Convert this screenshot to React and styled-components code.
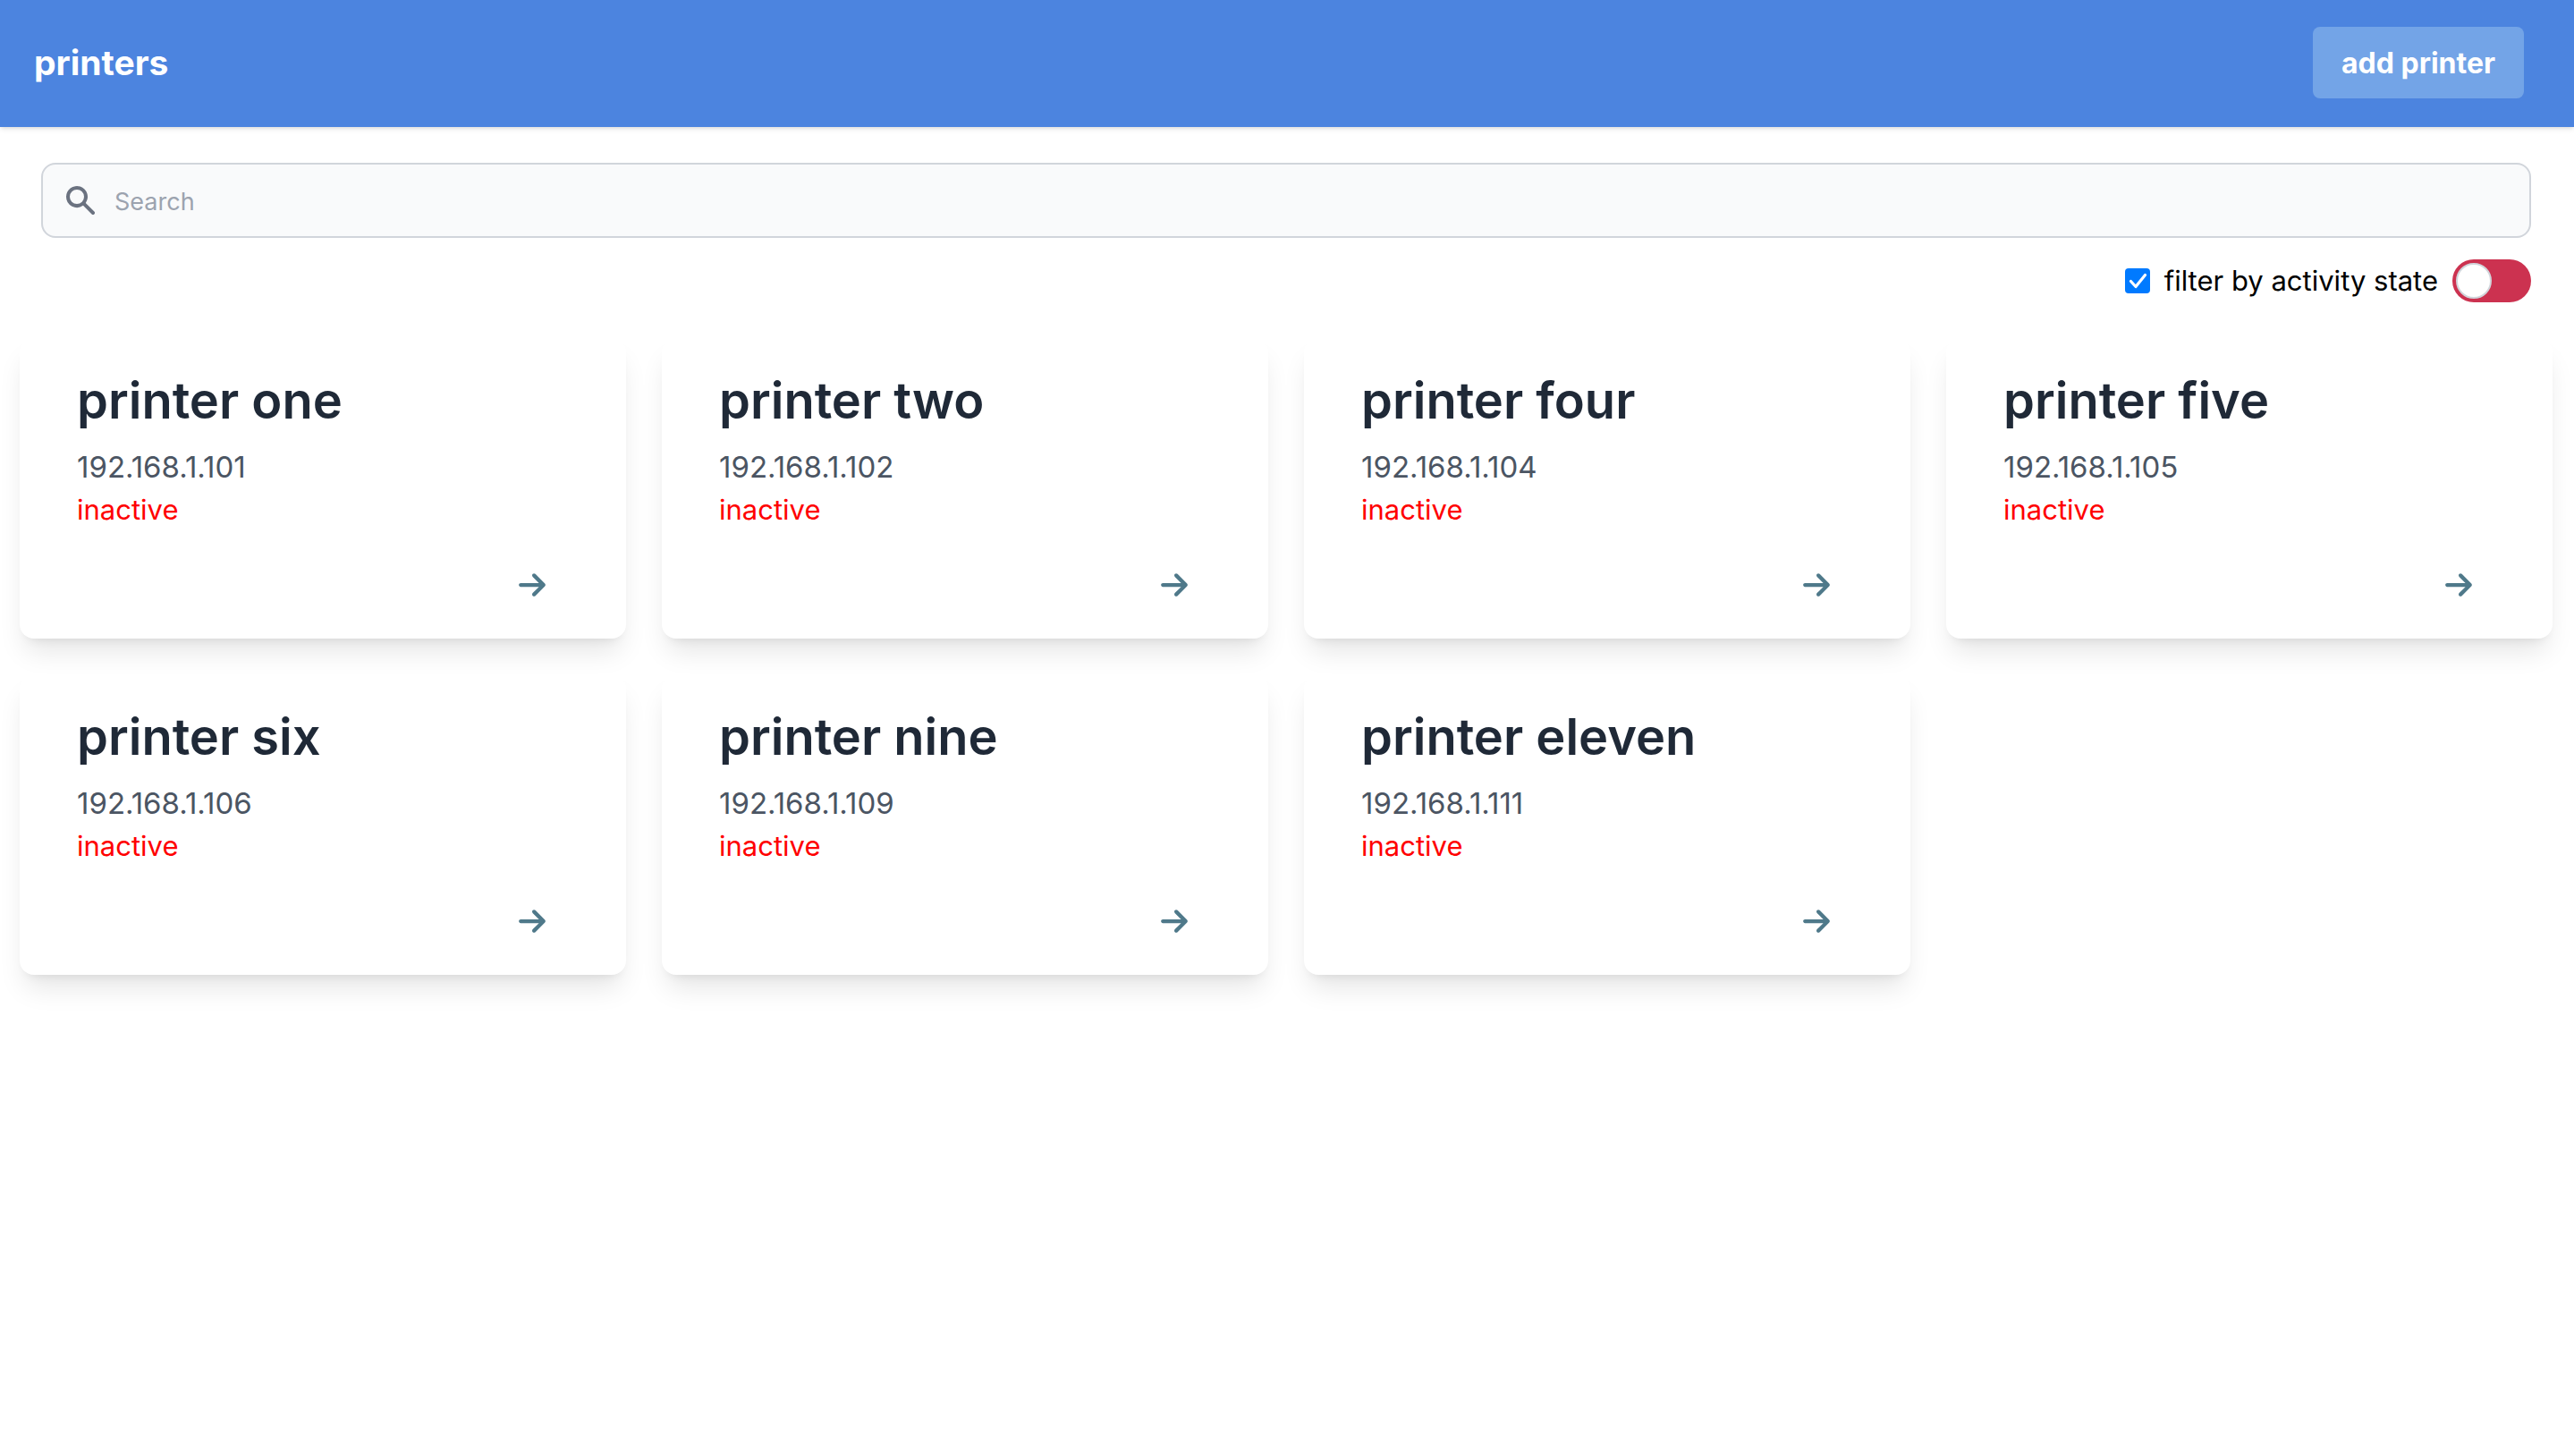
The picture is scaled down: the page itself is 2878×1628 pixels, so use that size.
import React, { useState } from "react";
import styled, { createGlobalStyle } from "styled-components";

const GlobalStyle = createGlobalStyle`
  *, *::before, *::after { box-sizing: border-box; }
  body {
    margin: 0;
    background: #ffffff;
    color: #000000;
    font-family: Inter, Roboto, "Liberation Sans", sans-serif;
    font-size: 31px;
    line-height: 48px;
  }
  button, input { font-family: inherit; }
`;

const Header = styled.header`
  display: flex;
  align-items: center;
  justify-content: space-between;
  padding: 30px 56px 32px 38px;
  background: #4c84df;
  box-shadow: 0 2px 6px rgba(0, 0, 0, 0.1), 0 2px 4px -2px rgba(0, 0, 0, 0.1);
`;

const Brand = styled.h1`
  margin: 0;
  color: #ffffff;
  font-size: 39px;
  line-height: 56px;
  font-weight: 700;
`;

const AddButton = styled.button`
  padding: 17px 32px 15px;
  border: 0;
  border-radius: 8px;
  background: #73a4e7;
  color: #ffffff;
  font-size: 32px;
  line-height: 48px;
  font-weight: 700;
  cursor: pointer;
`;

const Controls = styled.section`
  display: flex;
  flex-direction: column;
  gap: 24px;
  padding: 40px 48px 40px 46px;
`;

const SearchBox = styled.label`
  display: flex;
  align-items: center;
  gap: 18px;
  height: 84px;
  padding: 0 22px;
  border: 2px solid #d1d5db;
  border-radius: 16px;
  background: #f9fafb;
  color: #6b7280;
`;

const SearchInput = styled.input`
  flex: 1;
  min-width: 0;
  height: 40px;
  padding: 2px 0 0;
  border: 0;
  outline: 0;
  background: transparent;
  color: #111827;
  font-size: 27px;
  line-height: 38px;

  &::placeholder { color: #9ca3af; opacity: 1; }
`;

const FilterRow = styled.div`
  display: flex;
  align-items: center;
  justify-content: flex-end;
  gap: 16px;
`;

const FilterLabel = styled.label`
  display: flex;
  align-items: center;
  gap: 16px;
`;

const Checkbox = styled.input`
  appearance: none;
  width: 28px;
  height: 28px;
  margin: 0;
  border: 2px solid #767676;
  border-radius: 4px;
  background: #ffffff center / 100% no-repeat;

  &:checked {
    border: 0;
    background-color: #007aff;
    background-image: url("data:image/svg+xml,%3Csvg xmlns='http://www.w3.org/2000/svg' viewBox='0 0 28 28'%3E%3Cpath d='M6.5 14.500l5.500 6L22.500 7.500' fill='none' stroke='white' stroke-width='3.200' stroke-linecap='round' stroke-linejoin='round'/%3E%3C/svg%3E");
  }
`;

const Toggle = styled.input`
  appearance: none;
  display: flex;
  align-items: center;
  width: 88px;
  height: 48px;
  margin: 0;
  padding: 0 4px;
  border-radius: 24px;
  background: #cc3250;
  cursor: pointer;

  &::before {
    content: "";
    width: 40px;
    height: 40px;
    border: 2px solid #d1d5db;
    border-radius: 50%;
    background: #ffffff;
  }

  &:checked {
    justify-content: flex-end;
    background: #22c55e;
  }
`;

const Grid = styled.main`
  display: grid;
  grid-template-columns: repeat(auto-fill, minmax(560px, 1fr));
  gap: 40px;
  padding: 0 24px 40px 22px;
`;

const Card = styled.article`
  display: flex;
  flex-direction: column;
  padding: 34px 64px 32px;
  border-radius: 16px;
  background: #ffffff;
  box-shadow: 0 20px 30px -6px rgba(0, 0, 0, 0.1), 0 8px 12px -8px rgba(0, 0, 0, 0.1);
`;

const CardTitle = styled.h2`
  margin: 0 0 14px;
  color: #1f2937;
  font-size: 56px;
  line-height: 72px;
  font-weight: 600;
`;

const Address = styled.p`
  margin: 0;
  color: #4b5563;
  font-size: 33px;
`;

const Status = styled.p`
  margin: 0 0 32px;
  color: #ff0000;
`;

const OpenButton = styled.button`
  align-self: flex-end;
  display: flex;
  align-items: center;
  height: 56px;
  padding: 0 26px;
  border: 0;
  background: transparent;
  color: #4f798a;
  cursor: pointer;
`;

const SearchIcon = () => (
  <svg width="40" height="40" viewBox="0 0 20 20" fill="currentColor" aria-hidden="true">
    <path
      fillRule="evenodd"
      clipRule="evenodd"
      d="M8 4a4 4 0 100 8 4 4 0 000-8zM2 8a6 6 0 1110.89 3.476l4.817 4.817a1 1 0 01-1.414 1.414l-4.816-4.816A6 6 0 012 8z"
    />
  </svg>
);

const ArrowIcon = () => (
  <svg width="30" height="34" viewBox="0 0 448 512" fill="currentColor" aria-hidden="true">
    <path d="M438.6 278.6c12.5-12.5 12.5-32.8 0-45.3l-160-160c-12.5-12.5-32.8-12.5-45.3 0s-12.5 32.8 0 45.3L338.8 224 32 224c-17.7 0-32 14.3-32 32s14.3 32 32 32l306.7 0L233.4 393.4c-12.5 12.5-12.5 32.8 0 45.3s32.8 12.5 45.3 0l160-160z" />
  </svg>
);

const printers = [
  { name: "printer one", ip: "192.168.1.101" },
  { name: "printer two", ip: "192.168.1.102" },
  { name: "printer four", ip: "192.168.1.104" },
  { name: "printer five", ip: "192.168.1.105" },
  { name: "printer six", ip: "192.168.1.106" },
  { name: "printer nine", ip: "192.168.1.109" },
  { name: "printer eleven", ip: "192.168.1.111" },
];

export default function App() {
  const [query, setQuery] = useState("");
  const [filtering, setFiltering] = useState(true);
  const [active, setActive] = useState(false);

  const visible = printers.filter(
    (printer) => printer.name.includes(query) && !(filtering && active)
  );

  return (
    <>
      <GlobalStyle />
      <Header>
        <Brand>printers</Brand>
        <AddButton type="button">add printer</AddButton>
      </Header>
      <Controls>
        <SearchBox htmlFor="search">
          <SearchIcon />
          <SearchInput
            id="search"
            type="text"
            placeholder="Search"
            aria-label="Search"
            value={query}
            onChange={(event) => setQuery(event.target.value)}
          />
        </SearchBox>
        <FilterRow>
          <FilterLabel htmlFor="filter">
            <Checkbox
              id="filter"
              type="checkbox"
              checked={filtering}
              onChange={(event) => setFiltering(event.target.checked)}
            />
            filter by activity state
          </FilterLabel>
          <Toggle
            type="checkbox"
            role="switch"
            aria-label="active"
            checked={active}
            onChange={(event) => setActive(event.target.checked)}
          />
        </FilterRow>
      </Controls>
      <Grid>
        {visible.map((printer) => (
          <Card key={printer.ip}>
            <CardTitle>{printer.name}</CardTitle>
            <Address>{printer.ip}</Address>
            <Status>inactive</Status>
            <OpenButton type="button" aria-label={`open ${printer.name}`}>
              <ArrowIcon />
            </OpenButton>
          </Card>
        ))}
      </Grid>
    </>
  );
}
